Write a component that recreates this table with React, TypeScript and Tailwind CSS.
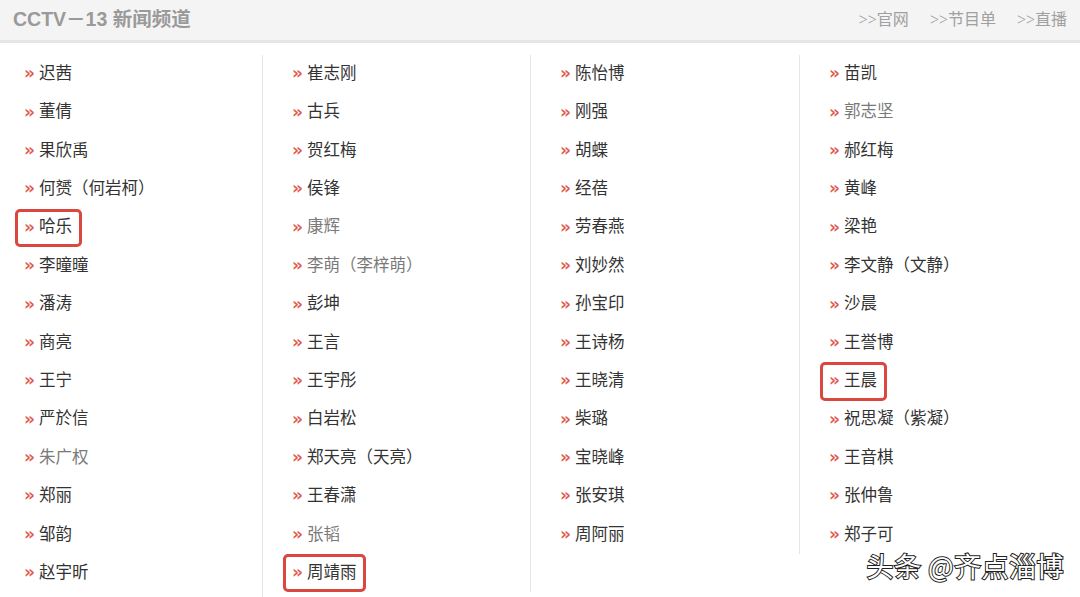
import React from 'react';

type Name = { text: string; muted?: boolean; marked?: boolean };

const columns: Name[][] = [
  [
    { text: '迟茜' },
    { text: '董倩' },
    { text: '果欣禹' },
    { text: '何赟（何岩柯）' },
    { text: '哈乐', marked: true },
    { text: '李曈曈' },
    { text: '潘涛' },
    { text: '商亮' },
    { text: '王宁' },
    { text: '严於信' },
    { text: '朱广权', muted: true },
    { text: '郑丽' },
    { text: '邹韵' },
    { text: '赵宇昕' },
  ],
  [
    { text: '崔志刚' },
    { text: '古兵' },
    { text: '贺红梅' },
    { text: '侯锋' },
    { text: '康辉', muted: true },
    { text: '李萌（李梓萌）', muted: true },
    { text: '彭坤' },
    { text: '王言' },
    { text: '王宇彤' },
    { text: '白岩松' },
    { text: '郑天亮（天亮）' },
    { text: '王春潇' },
    { text: '张韬', muted: true },
    { text: '周靖雨', marked: true },
  ],
  [
    { text: '陈怡博' },
    { text: '刚强' },
    { text: '胡蝶' },
    { text: '经蓓' },
    { text: '劳春燕' },
    { text: '刘妙然' },
    { text: '孙宝印' },
    { text: '王诗杨' },
    { text: '王晓清' },
    { text: '柴璐' },
    { text: '宝晓峰' },
    { text: '张安琪' },
    { text: '周阿丽' },
  ],
  [
    { text: '苗凯' },
    { text: '郭志坚', muted: true },
    { text: '郝红梅' },
    { text: '黄峰' },
    { text: '梁艳' },
    { text: '李文静（文静）' },
    { text: '沙晨' },
    { text: '王誉博' },
    { text: '王晨', marked: true },
    { text: '祝思凝（紫凝）' },
    { text: '王音棋' },
    { text: '张仲鲁' },
    { text: '郑子可' },
  ],
];

const NameRow = ({ item }: { item: Name }) => (
  <li className="h-[38.4px] flex items-center">
    <span className="relative inline-flex items-center h-full">
      {item.marked && (
        <span className="absolute -left-[9px] -right-[10px] top-[0px] bottom-[0px] border-[3px] border-[#d9473f] rounded-[5px]" />
      )}
      <span className="text-[#df5a4e] text-[17px] font-bold leading-none mr-[4px] -mt-[1px] [font-family:'DejaVu_Sans',sans-serif]">»</span>
      <span className={item.muted ? 'text-[#7a7a7a]' : 'text-[#333]'}>{item.text}</span>
    </span>
  </li>
);

export default function App() {
  return (
    <div className="relative w-[1080px] h-[597px] overflow-hidden bg-white [font-family:'Liberation_Serif','Noto_Sans_CJK_SC',serif]">
      {/* header bar */}
      <div className="h-[43px] bg-[#f4f4f4] border-b-[3px] border-[#e6e6e6] flex items-center justify-between pl-[13px] pr-[13px]">
        <div className="text-[19.5px] font-bold text-[#9a9a9a] [font-family:'Liberation_Sans','Noto_Sans_CJK_SC',sans-serif] -mt-[1px]">
          CCTV－13 新闻频道
        </div>
        <div className="flex gap-[21px] text-[16px] text-[#a0a0a0] -mt-[1px]">
          <span>&gt;&gt;官网</span>
          <span>&gt;&gt;节目单</span>
          <span>&gt;&gt;直播</span>
        </div>
      </div>

      {/* name columns */}
      <div className="grid grid-cols-[263px_268px_269px_1fr] items-start pt-[12px] text-[16.5px]">
        {columns.map((col, i) => (
          <ul
            key={i}
            className={
              (i === 0 ? 'pl-[24px]' : 'pl-[29px]') +
              (i < 3 ? ' border-r border-[#e6e6e6]' : '') +
              (i === 0 ? ' pb-[20px]' : '')
            }
          >
            {col.map(item => (
              <NameRow key={item.text} item={item} />
            ))}
          </ul>
        ))}
      </div>

      {/* watermark */}
      <div className="absolute right-[16px] bottom-[18px] text-[27px] leading-none text-white [font-family:'Noto_Sans_CJK_SC',sans-serif] [-webkit-text-stroke:2px_#222] [paint-order:stroke_fill] tracking-[0.5px]">
        头条 @齐点淄博
      </div>
    </div>
  );
}
